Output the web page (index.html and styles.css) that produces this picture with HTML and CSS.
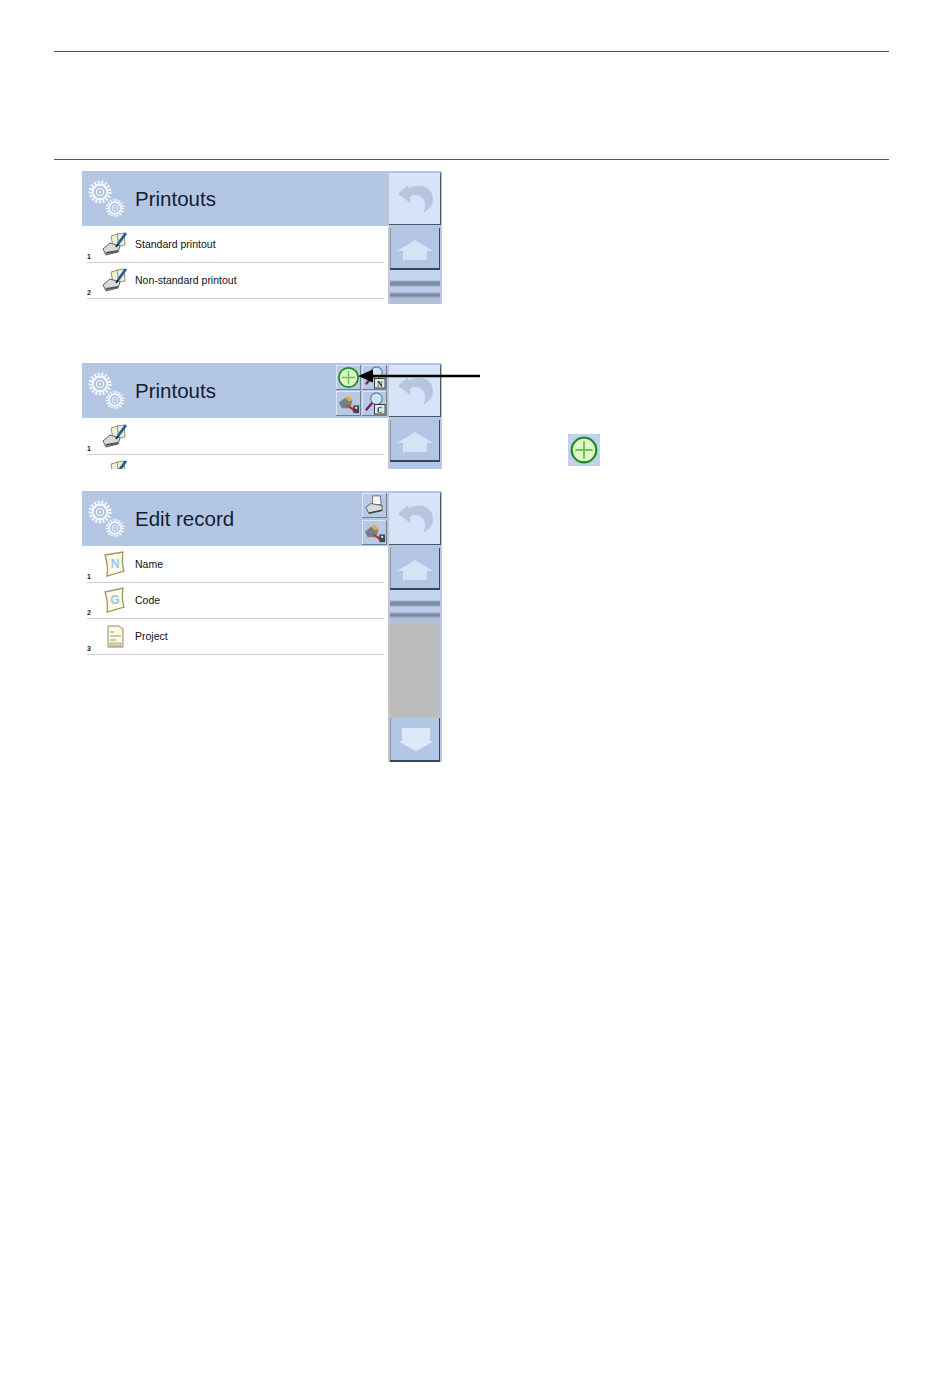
FILE: index.html
```html
<!DOCTYPE html>
<html lang="en">
<head>
  <meta charset="UTF-8">
  <title>Printouts</title>
  <link rel="stylesheet" href="styles.css">
</head>
<body>
  <!-- shared icons -->
  <svg class="defs" width="0" height="0">
    <defs>
      <g id="cog-teeth">
        <circle r="10" fill="none" stroke="#f4f7fc" stroke-width="3" stroke-dasharray="2 1.700"/>
        <circle r="7.400" fill="none" stroke="#f4f7fc" stroke-width="2.200"/>
        <circle r="3.600" fill="none" stroke="#f4f7fc" stroke-width="1.100"/>
        <circle r="1" fill="#f4f7fc"/>
      </g>
      <symbol id="gears" viewBox="0 0 40 40">
        <use href="#cog-teeth" transform="translate(13 13)"/>
        <use href="#cog-teeth" transform="translate(28 29) scale(.8)"/>
      </symbol>
      <symbol id="back" viewBox="0 0 52 52">
        <path d="M9 21 L19 12 L20 16 C28 9 44 12 44 27 C44 33 39 37 34 40 C37 34 37 27 32 24 C28 21 24 22 21 24 L21 30 Z" fill="#b6c6e0"/>
      </symbol>
      <symbol id="home" viewBox="0 0 50 42">
        <path d="M25 12 L43 23 L37 23 L37 32 L13 32 L13 23 L7 23 Z" fill="#d6e3f6"/>
      </symbol>
      <symbol id="down" viewBox="0 0 50 44">
        <path d="M12 10 L40 10 L40 23 L43 24 L26 33 L9 24 L12 23 Z" fill="#dde8f8"/>
      </symbol>
      <symbol id="print-edit" viewBox="0 0 27 27">
        <path d="M10 5 L17 3 L19 14 L12 16 Z" fill="#eef0d0" stroke="#6f7a70" stroke-width=".8"/>
        <path d="M16 3 L23 2 L24 14 L18 15 Z" fill="#f5ecc0" stroke="#6f7a70" stroke-width=".8"/>
        <path d="M2 18 L9 12 L19 15 L17 21 L5 24 Z" fill="#d8dde3" stroke="#5a5f66" stroke-width="1"/>
        <path d="M5 22 L17 20" stroke="#555" stroke-width="1.800"/>
        <path d="M17 13 L25 2" stroke="#1f5f9f" stroke-width="2.800"/>
        <path d="M17 13 L15 16" stroke="#111" stroke-width="1.500"/>
      </symbol>
      <symbol id="plus" viewBox="0 0 26 26">
        <circle cx="13" cy="13" r="10" fill="#e0f5c8" stroke="#1c8f28" stroke-width="1.800"/>
        <path d="M13 6 V20 M6 13 H20" stroke="#6cc850" stroke-width="1.600"/>
      </symbol>
      <symbol id="wizard" viewBox="0 0 26 26">
        <path d="M3 12 L11 6 L17 10 L15 18 L6 18 Z" fill="#7b7f83"/>
        <path d="M9 7 L13 5 L18 9 L14 11 Z" fill="#d9b23e"/>
        <path d="M10 14 L19 18 L18 21 Z" fill="#d01f2a"/>
        <rect x="18" y="15" width="6" height="8" fill="#40484f"/>
        <rect x="20" y="16.500" width="2" height="2" fill="#eee"/>
      </symbol>
      <symbol id="search-n" viewBox="0 0 26 26">
        <path d="M4 20 L11 12" stroke="#7a1e50" stroke-width="2.400"/>
        <circle cx="15" cy="8" r="6" fill="#cfe3f5" stroke="#5f7f9f" stroke-width="1.200"/>
        <rect x="13" y="14" width="11" height="10" fill="#e8e8e8" stroke="#333"/>
        <text x="18.500" y="22.500" class="key">N</text>
      </symbol>
      <symbol id="search-c" viewBox="0 0 26 26">
        <path d="M4 20 L11 12" stroke="#7a1e50" stroke-width="2.400"/>
        <circle cx="15" cy="8" r="6" fill="#cfe3f5" stroke="#5f7f9f" stroke-width="1.200"/>
        <rect x="13" y="14" width="11" height="10" fill="#e8e8e8" stroke="#333"/>
        <text x="18.500" y="22.500" class="key">C</text>
      </symbol>
      <symbol id="printer" viewBox="0 0 26 26">
        <path d="M11 3 L19 3 L20 12 L11 13 Z" fill="#f4f6f8" stroke="#666" stroke-width=".9"/>
        <path d="M4 15 L9 11 L21 13 L21 18 L7 21 Z" fill="#d7dbe0" stroke="#555" stroke-width=".9"/>
        <path d="M7 21 L21 18" stroke="#444" stroke-width="1.500"/>
      </symbol>
      <symbol id="card-n" viewBox="0 0 27 27">
        <path d="M4 4 L22 1 C21 8 21 14 23 20 L6 25 C7 18 6 10 4 4 Z" fill="#fbf8e6" stroke="#a09560" stroke-width="1.300"/>
        <text x="14" y="17" class="card-letter">N</text>
      </symbol>
      <symbol id="card-c" viewBox="0 0 27 27">
        <path d="M4 5 L22 1 C21 8 21 14 23 20 L6 25 C7 18 6 11 4 5 Z" fill="#fbf8e6" stroke="#a09560" stroke-width="1.300"/>
        <text x="14" y="17" class="card-letter">G</text>
      </symbol>
      <symbol id="sheet" viewBox="0 0 27 27">
        <path d="M7 3 L18 3 L22 6 L22 24 L7 24 Z" fill="#fbf8dc" stroke="#8d8d70" stroke-width="1"/>
        <path d="M9 9 H13 M9 13 H20 M9 17 H15" stroke="#9a9a80" stroke-width="1"/>
        <rect x="9" y="20" width="11" height="3" fill="#e0dca8" stroke="#8d8d70" stroke-width=".6"/>
      </symbol>
    </defs>
  </svg>

  <div class="page">
    <hr class="rule">
    <div class="head-gap"></div>
    <hr class="rule">

    <div class="screens">
      <section class="screen-row">
        <div class="screen screen-short">
          <div class="main">
            <header class="title-bar">
              <svg class="gears"><use href="#gears"/></svg>
              <span class="title">Printouts</span>
            </header>
            <div class="item"><span class="num">1</span><svg class="item-icon"><use href="#print-edit"/></svg><span class="label">Standard printout</span></div>
            <div class="item"><span class="num">2</span><svg class="item-icon"><use href="#print-edit"/></svg><span class="label">Non-standard printout</span></div>
          </div>
          <div class="side">
            <div class="btn-back"><svg class="btn-svg"><use href="#back"/></svg></div>
            <div class="btn-nav"><svg class="btn-svg"><use href="#home"/></svg></div>
            <div class="thumb"></div>
          </div>
        </div>
      </section>

      <section class="screen-row">
        <div class="screen screen-clip">
          <div class="main">
            <header class="title-bar">
              <svg class="gears"><use href="#gears"/></svg>
              <span class="title">Printouts</span>
              <div class="tools tools-four">
                <div class="tool"><svg><use href="#plus"/></svg></div>
                <div class="tool"><svg><use href="#search-n"/></svg></div>
                <div class="tool"><svg><use href="#wizard"/></svg></div>
                <div class="tool"><svg><use href="#search-c"/></svg></div>
              </div>
            </header>
            <div class="item"><span class="num">1</span><svg class="item-icon"><use href="#print-edit"/></svg></div>
            <div class="item"><svg class="item-icon"><use href="#print-edit"/></svg></div>
          </div>
          <div class="side">
            <div class="btn-back"><svg class="btn-svg"><use href="#back"/></svg></div>
            <div class="btn-nav"><svg class="btn-svg"><use href="#home"/></svg></div>
          </div>
        </div>
        <svg class="pointer" width="124" height="14" viewBox="0 0 124 14">
          <path d="M122 7 H12" stroke="#000" stroke-width="2.600"/>
          <path d="M0 7 L15 0.500 L15 13.500 Z" fill="#000"/>
        </svg>
        <div class="note">
          <div class="note-icon"><svg><use href="#plus"/></svg></div>
        </div>
      </section>

      <section class="screen-row">
        <div class="screen screen-tall">
          <div class="main">
            <header class="title-bar">
              <svg class="gears"><use href="#gears"/></svg>
              <span class="title">Edit record</span>
              <div class="tools">
                <div class="tool"><svg><use href="#printer"/></svg></div>
                <div class="tool"><svg><use href="#wizard"/></svg></div>
              </div>
            </header>
            <div class="item"><span class="num">1</span><svg class="item-icon"><use href="#card-n"/></svg><span class="label">Name</span></div>
            <div class="item"><span class="num">2</span><svg class="item-icon"><use href="#card-c"/></svg><span class="label">Code</span></div>
            <div class="item"><span class="num">3</span><svg class="item-icon"><use href="#sheet"/></svg><span class="label">Project</span></div>
          </div>
          <div class="side">
            <div class="btn-back"><svg class="btn-svg"><use href="#back"/></svg></div>
            <div class="btn-nav"><svg class="btn-svg"><use href="#home"/></svg></div>
            <div class="thumb"></div>
            <div class="track"></div>
            <div class="btn-nav btn-down"><svg class="btn-svg"><use href="#down"/></svg></div>
          </div>
        </div>
      </section>
    </div>
  </div>
</body>
</html>
```
FILE: styles.css
```css
body {
  margin: 0;
  background: #fff;
  font-family: "Liberation Sans", Arial, sans-serif;
  color: #111;
}

.defs {
  position: absolute;
}

.key {
  font: bold 8px "Liberation Serif", serif;
  text-anchor: middle;
  fill: #222;
}

.card-letter {
  font: bold 12px "Liberation Sans", sans-serif;
  text-anchor: middle;
  fill: #9cc6ea;
}

.page {
  padding: 51px 61px 0 54px;
}

.rule {
  margin: 0;
  border: none;
  height: 1px;
  background: #555;
}

.head-gap {
  height: 107px;
}

.screens {
  padding: 11px 0 0 28px;
  display: flex;
  flex-direction: column;
}

.screen-row {
  position: relative;
  display: flex;
  align-items: flex-start;
}

.screen-row:nth-child(2) {
  margin-top: 59px;
}

.screen-row:nth-child(3) {
  margin-top: 22px;
}

.screen {
  width: 360px;
  display: flex;
  overflow: hidden;
  background: #fff;
}

.screen-short {
  height: 133px;
}

.screen-clip {
  height: 106px;
}

.screen-tall {
  height: 271px;
}

.main {
  width: 306px;
  flex: none;
}

.title-bar {
  height: 55px;
  margin-bottom: 1px;
  display: flex;
  align-items: center;
  background: #b3c7e5;
  position: relative;
}

.gears {
  width: 40px;
  height: 40px;
  margin: 0 0 0 5px;
  flex: none;
}

.title {
  margin-left: 8px;
  font-size: 20.500px;
  color: #14202e;
}

.tools {
  margin-left: auto;
  margin-right: 1px;
  display: grid;
  grid-template-columns: 25px;
  gap: 2px;
}

.tools-four {
  grid-template-columns: 25px 25px;
  gap: 1px;
}

.tool {
  width: 25px;
  height: 25px;
  background: #b7c9e5;
  box-shadow: inset -1px -1px 0 #6f7f96, inset 1px 1px 0 #dbe5f5;
}

.tool svg {
  display: block;
  width: 25px;
  height: 25px;
}

.item {
  position: relative;
  height: 35px;
  margin: 0 4px 0 5px;
  border-bottom: 1px solid #cfcfcf;
  display: flex;
  align-items: center;
}

.num {
  position: absolute;
  left: 0;
  bottom: 1px;
  font-size: 7px;
  line-height: 8px;
  font-weight: bold;
  color: #222;
}

.item-icon {
  position: absolute;
  left: 14px;
  top: 4px;
  width: 27px;
  height: 27px;
}

.label {
  margin-left: 48px;
  margin-top: -1px;
  font-size: 10.500px;
  color: #111;
}

.side {
  width: 54px;
  flex: none;
  display: flex;
  flex-direction: column;
  align-items: center;
  background: #b3c7e5;
  box-shadow: inset 2px 0 0 #c4c6ca, inset -1px 0 0 #c4c6ca;
}

.btn-back {
  width: 52px;
  height: 52px;
  margin-top: 2px;
  background: #d6e3f8;
  box-shadow: inset -1px -1px 0 #4a5666;
  flex: none;
}

.btn-nav {
  width: 50px;
  height: 42px;
  margin-top: 3px;
  background: #b3c7e5;
  box-shadow: inset -1px -2px 0 #38465a, inset 1px 0 0 #8797b0;
  flex: none;
}

.btn-svg {
  display: block;
  width: 100%;
  height: 100%;
}

.thumb {
  width: 50px;
  height: 35px;
  flex: none;
  background: linear-gradient(#c3d4ef 0 10px, #7c8aa3 12px 15px, #bccdea 17px 22px, #7c8aa3 24px 26px, #a9bcdc 28px, #b3c2da 31px, #bcbcbc 35px);
}

.track {
  width: 50px;
  height: 92px;
  background: #bcbcbc;
  flex: none;
}

.btn-down {
  margin-top: 1px;
  height: 44px;
}

.pointer {
  position: absolute;
  left: 276px;
  top: 6px;
}

.note {
  margin: 71px 0 0 126px;
}

.note-icon {
  width: 32px;
  height: 32px;
  background: #c3d2ec;
}

.note-icon svg {
  display: block;
  width: 32px;
  height: 32px;
}
```
